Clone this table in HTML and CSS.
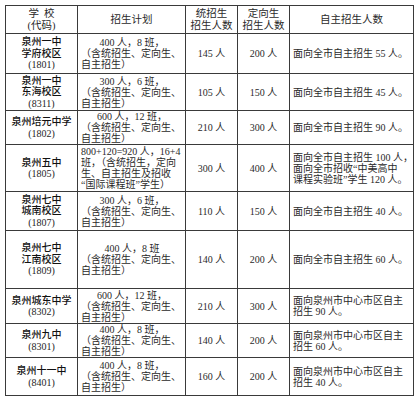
FILE: index.html
```html
<!DOCTYPE html>
<html lang="zh">
<head>
<meta charset="utf-8">
<link rel="stylesheet" href="styles.css">
</head>
<body>
<table class="plan">
  <colgroup>
    <col class="w1"><col class="w2"><col class="w3"><col class="w4"><col class="w5">
  </colgroup>
  <tr class="h0">
    <th><div class="ln">学&nbsp;&nbsp;校</div><div class="ln">(代码)</div></th>
    <th>招生计划</th>
    <th><div class="ln">统招生</div><div class="ln">招生人数</div></th>
    <th><div class="ln">定向生</div><div class="ln">招生人数</div></th>
    <th>自主招生人数</th>
  </tr>
  <tr class="h1">
    <td class="name"><div class="ln b">泉州一中</div><div class="ln b">学府校区</div><div class="ln">(1801)</div></td>
    <td class="plan-c"><div class="ln first">400 人，8 班，</div><div class="ln">（含统招生、定向生、</div><div class="ln">自主招生）</div></td>
    <td class="num">145 人</td>
    <td class="num">200 人</td>
    <td class="free">面向全市自主招生 55 人。</td>
  </tr>
  <tr class="h2">
    <td class="name"><div class="ln b">泉州一中</div><div class="ln b">东海校区</div><div class="ln">(8311)</div></td>
    <td class="plan-c"><div class="ln first">300 人，6 班，</div><div class="ln">（含统招生、定向生、</div><div class="ln">自主招生）</div></td>
    <td class="num">105 人</td>
    <td class="num">150 人</td>
    <td class="free">面向全市自主招生 45 人。</td>
  </tr>
  <tr class="h3">
    <td class="name"><div class="ln b">泉州培元中学</div><div class="ln">(1802)</div></td>
    <td class="plan-c"><div class="ln first">600 人，12 班，</div><div class="ln">（含统招生、定向生、</div><div class="ln">自主招生）</div></td>
    <td class="num">210 人</td>
    <td class="num">300 人</td>
    <td class="free">面向全市自主招生 90 人。</td>
  </tr>
  <tr class="h4">
    <td class="name"><div class="ln b">泉州五中</div><div class="ln">(1805)</div></td>
    <td class="plan-c"><div class="ln">800+120=920 人，16+4</div><div class="ln">班，（含统招生，定向</div><div class="ln">生、自主招生及招收</div><div class="ln">“国际课程班”学生）</div></td>
    <td class="num">300 人</td>
    <td class="num">400 人</td>
    <td class="free"><div class="ln">面向全市自主招生 100 人，</div><div class="ln">面向全市招收“中美高中</div><div class="ln">课程实验班”学生 120 人。</div></td>
  </tr>
  <tr class="h5">
    <td class="name"><div class="ln b">泉州七中</div><div class="ln b">城南校区</div><div class="ln">(1807)</div></td>
    <td class="plan-c"><div class="ln first">300 人，6 班，</div><div class="ln">（含统招生、定向生、</div><div class="ln">自主招生）</div></td>
    <td class="num">110 人</td>
    <td class="num">150 人</td>
    <td class="free">面向全市自主招生 40 人。</td>
  </tr>
  <tr class="h6">
    <td class="name"><div class="ln b">泉州七中</div><div class="ln b">江南校区</div><div class="ln">(1809)</div></td>
    <td class="plan-c"><div class="ln first">400 人，8 班</div><div class="ln">（含统招生、定向生、</div><div class="ln">自主招生）</div></td>
    <td class="num">140 人</td>
    <td class="num">200 人</td>
    <td class="free">面向全市自主招生 60 人。</td>
  </tr>
  <tr class="h7">
    <td class="name"><div class="ln b">泉州城东中学</div><div class="ln">(8302)</div></td>
    <td class="plan-c"><div class="ln first">600 人，12 班，</div><div class="ln">（含统招生、定向生、</div><div class="ln">自主招生）</div></td>
    <td class="num">210 人</td>
    <td class="num">300 人</td>
    <td class="free"><div class="ln">面向泉州市中心市区自主</div><div class="ln">招生 90 人。</div></td>
  </tr>
  <tr class="h8">
    <td class="name"><div class="ln b">泉州九中</div><div class="ln">(8301)</div></td>
    <td class="plan-c"><div class="ln first">400 人，8 班，</div><div class="ln">（含统招生、定向生、</div><div class="ln">自主招生）</div></td>
    <td class="num">140 人</td>
    <td class="num">200 人</td>
    <td class="free"><div class="ln">面向泉州市中心市区自主</div><div class="ln">招生 60 人。</div></td>
  </tr>
  <tr class="h9">
    <td class="name"><div class="ln b">泉州十一中</div><div class="ln">(8401)</div></td>
    <td class="plan-c"><div class="ln first">400 人，8 班，</div><div class="ln">（含统招生、定向生、</div><div class="ln">自主招生）</div></td>
    <td class="num">160 人</td>
    <td class="num">200 人</td>
    <td class="free"><div class="ln">面向泉州市中心市区自主</div><div class="ln">招生 40 人。</div></td>
  </tr>
</table>
</body>
</html>
```

FILE: styles.css
```css
html, body {
  margin: 0;
  padding: 0;
  background: #ffffff;
}
body {
  font-family: "Liberation Serif", "Noto Sans CJK SC", serif;
  font-size: 10px;
  line-height: 11px;
  color: #2a2a2a;
}
.plan {
  margin: 5px 0 0 5px;
  border-collapse: collapse;
  table-layout: fixed;
  width: 409px;
  border: 1px solid #3a3a3a;
}
.w1 { width: 72px; }
.w2 { width: 108px; }
.w3 { width: 52px; }
.w4 { width: 52px; }
.w5 { width: 124px; }
.plan th,
.plan td {
  border: 1px solid #3a3a3a;
  padding: 0;
  vertical-align: middle;
  text-align: center;
  font-weight: normal;
  overflow: hidden;
}
.plan th {
  font-size: 10.5px;
  line-height: 12px;
}
.ln {
  display: block;
  height: 11px;
  line-height: 11px;
  white-space: nowrap;
}
.plan th .ln {
  height: 12px;
  line-height: 12px;
}
.name .ln {
  height: 11.5px;
  line-height: 11.5px;
  color: #1e1e1e;
}
.name .b {
  font-weight: 500;
  color: #111111;
}
.plan-c {
  text-align: left !important;
  padding: 0 2px 0 3px !important;
}
.plan-c .first {
  text-align: center;
}
.free {
  text-align: left !important;
  padding: 0 2px 0 3px !important;
  white-space: nowrap;
}
.h0 { height: 28px; }
.h1 { height: 40px; }
.h2 { height: 37px; }
.h3 { height: 33px; }
.h4 { height: 47px; }
.h5 { height: 39px; }
.h6 { height: 58px; }
.h7 { height: 35px; }
.h8 { height: 33px; }
.h9 { height: 38px; }
```
